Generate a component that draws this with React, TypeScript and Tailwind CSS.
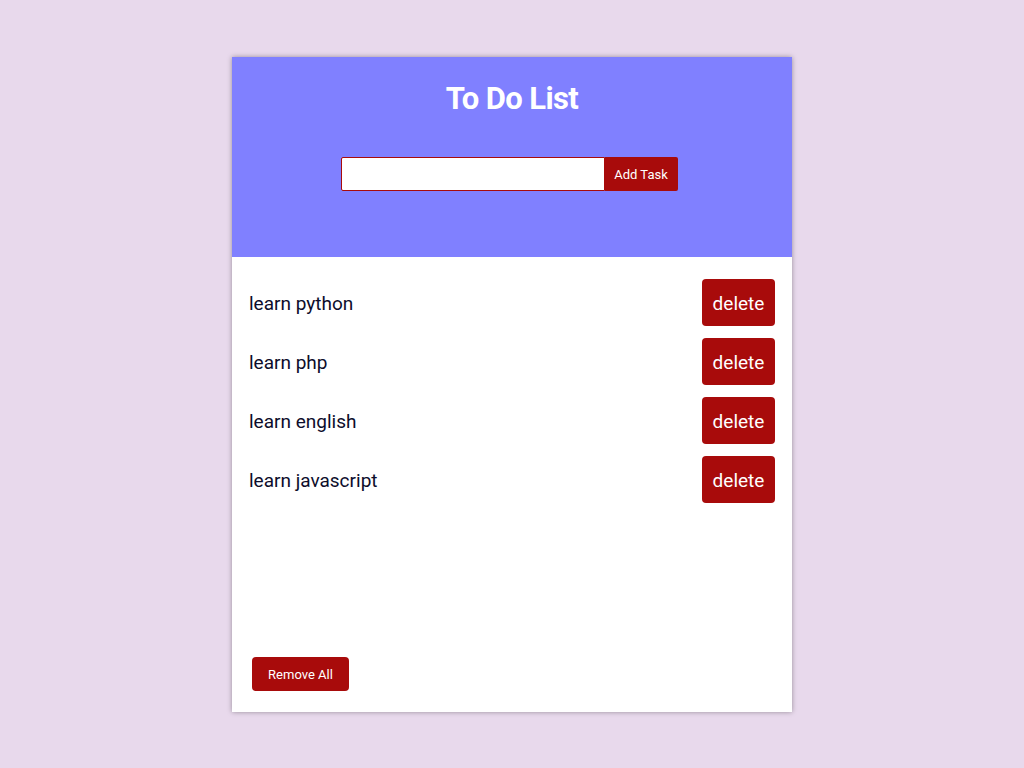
import { useState } from "react";

const font = { fontFamily: "Roboto, 'Noto Sans', sans-serif" };

export default function App() {
  const [tasks, setTasks] = useState(["learn python", "learn php", "learn english", "learn javascript"]);
  const [text, setText] = useState("");

  function addTask() {
    if (!text.trim()) return;
    setTasks([...tasks, text.trim()]);
    setText("");
  }

  return (
    <div className="min-h-[768px] bg-[#e8d9ec] pt-[57px]" style={font}>
      <div className="mx-auto flex h-[655px] w-[560px] flex-col bg-white shadow-[0_0_5px_rgba(0,0,0,0.35)]">
        <div className="flex h-[200px] flex-col items-center bg-[#8080ff]">
          <h1 className="mt-[20px] text-[31px] font-bold leading-[44px] tracking-[-0.6px] text-white">To Do List</h1>
          <div className="mr-[6px] mt-[36px] flex h-[34px]">
            <input
              value={text}
              onChange={(e) => setText(e.target.value)}
              className="h-[34px] w-[264px] rounded-l-[2px] border border-[#a80b0b] bg-white px-2 outline-none"
            />
            <button
              onClick={addTask}
              className="h-[34px] w-[73px] rounded-r-[2px] bg-[#a80b0b] pt-[1px] text-[13px] text-white"
            >
              Add Task
            </button>
          </div>
        </div>

        <ul className="flex flex-1 flex-col gap-[12px] px-[17px] pt-[22px]">
          {tasks.map((t, i) => (
            <li key={i} className="flex items-center justify-between">
              <span className="mt-[4px] text-[19px] text-[#0d0d2b]">{t}</span>
              <button
                onClick={() => setTasks(tasks.filter((_, j) => j !== i))}
                className="h-[47px] w-[73px] rounded-[4px] bg-[#a80b0b] pt-[3px] text-[19px] text-white"
              >
                delete
              </button>
            </li>
          ))}
        </ul>

        <div className="px-[20px] pb-[21px]">
          <button
            onClick={() => setTasks([])}
            className="h-[34px] w-[97px] rounded-[4px] bg-[#a80b0b] pt-[1px] text-[13px] text-white"
          >
            Remove All
          </button>
        </div>
      </div>
    </div>
  );
}
